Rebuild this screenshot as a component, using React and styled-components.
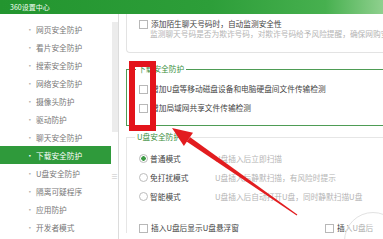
import React from 'react';
import styled, { createGlobalStyle } from 'styled-components';

const GlobalStyle = createGlobalStyle`
  html, body {
    margin: 0;
    padding: 0;
    background: #fff;
  }
  body {
    font-family: "Noto Sans CJK SC", "Noto Sans", sans-serif;
  }
`;

const menu = [
  '网页安全防护',
  '看片安全防护',
  '搜索安全防护',
  '网络安全防护',
  '摄像头防护',
  '驱动防护',
  '聊天安全防护',
  '下载安全防护',
  'U盘安全防护',
  '隔离可疑程序',
  '应用防护',
  '开发者模式',
];

const modes = [
  { name: '普通模式', desc: 'U盘插入后立即扫描', checked: true },
  { name: '免打扰模式', desc: 'U盘插入后静默扫描，有风险时提示' },
  { name: '智能模式', desc: 'U盘插入后自动打开U盘，同时静默扫描U盘' },
];

const App = () => {
  return (
    <>
      <GlobalStyle />
      <Window>
        <Header>
          <Title>360设置中心</Title>
        </Header>
        <Main>
          <Sidebar>
            {menu.map((item) => (
              <MenuItem key={item} $active={item === '下载安全防护'}>
                <Bullet $active={item === '下载安全防护'}>·</Bullet>
                {item}
              </MenuItem>
            ))}
          </Sidebar>
          <ScrollTrack>
            <ScrollThumb />
            <Grip>≡</Grip>
          </ScrollTrack>
          <Content>
            <Card>
              <Row>
                <CheckBox />
                <Label>添加陌生聊天号码时，自动监测安全性</Label>
              </Row>
              <Desc>监测聊天号码是否为欺诈号码，对欺诈号码给予风险提醒，确保网购安全</Desc>
            </Card>

            <Group $accent>
              <Legend $shift={-3}>下载安全防护</Legend>
              <Row>
                <CheckBox />
                <Label>增加U盘等移动磁盘设备和电脑硬盘间文件传输检测</Label>
              </Row>
              <Row $gap>
                <CheckBox />
                <Label>增加局域网共享文件传输检测</Label>
              </Row>
            </Group>

            <Group>
              <Legend $shift={-4}>U盘安全防护</Legend>
              {modes.map((m, i) => (
                <Row key={m.name} $gap={i > 0}>
                  <Radio $checked={m.checked} />
                  <ModeName>{m.name}</ModeName>
                  <ModeDesc>{m.desc}</ModeDesc>
                </Row>
              ))}
              <BottomRow>
                <Row>
                  <CheckBox />
                  <Label>插入U盘后显示U盘悬浮窗</Label>
                </Row>
                <Row>
                  <CheckBox />
                  <Label>插入U盘后</Label>
                </Row>
              </BottomRow>
            </Group>
          </Content>
        </Main>

        <Overlay>
          <RedBox />
          <Arrow width="383" height="239" viewBox="0 0 383 239">
            <polygon points="172,128 193,132.8 183.9,146" fill="#e21c1f" />
            <polygon points="186.6,141.6 190.2,137.2 297.3,214.6 296.7,215.4" fill="#e21c1f" />
          </Arrow>
          <Bubble />
        </Overlay>
      </Window>
    </>
  );
};

export default App;

const Window = styled.div`
  position: relative;
  width: 383px;
  height: 239px;
  overflow: hidden;
  background: #fff;
  font-size: 7.7px;
  color: #444;
`;

const Header = styled.div`
  height: 14px;
  display: flex;
  align-items: center;
  padding-left: 10px;
  background: linear-gradient(to right, #23952f 0%, #2d9e39 55%, #47b04f 85%, #8fd08e 100%);
  box-sizing: border-box;
`;

const Title = styled.span`
  color: #f4fff4;
  font-size: 7px;
  line-height: 14px;
`;

const Main = styled.div`
  display: flex;
  height: 225px;
`;

const Sidebar = styled.div`
  flex: none;
  width: 111px;
  padding-top: 6px;
  background: #fff;
`;

const MenuItem = styled.div`
  display: flex;
  align-items: center;
  height: 18px;
  padding-left: 26px;
  color: ${({ $active }) => ($active ? '#fff' : '#777')};
  background: ${({ $active }) => ($active ? '#2f9a3b' : 'transparent')};
  white-space: nowrap;
`;

const Bullet = styled.span`
  width: 10px;
  color: ${({ $active }) => ($active ? '#fff' : '#b0b0b0')};
`;

const ScrollTrack = styled.div`
  flex: none;
  width: 7px;
  border-right: 1px solid #dcdcdc;
  display: flex;
  flex-direction: column;
  align-items: center;
  padding-top: 8px;
`;

const ScrollThumb = styled.div`
  width: 6px;
  height: 110px;
  background: #ececec;
`;

const Grip = styled.div`
  margin-top: 40px;
  font-size: 7px;
  line-height: 8px;
  color: #c4c4c4;
`;

const Content = styled.div`
  flex: 1;
  min-width: 0;
  overflow: hidden;
  padding-left: 7px;
  display: flex;
  flex-direction: column;
`;

const Card = styled.div`
  flex: none;
  height: 39px;
  box-sizing: border-box;
  padding: 5px 0 0 12px;
  border: 1px solid #e3e3e3;
  border-top: none;
  border-right: none;
  border-radius: 0 0 0 4px;
`;

const Row = styled.div`
  display: flex;
  align-items: center;
  height: 10px;
  margin-top: ${({ $gap }) => ($gap ? '9px' : '0')};
  white-space: nowrap;
`;

const CheckBox = styled.span`
  width: 7px;
  height: 7px;
  flex: none;
  border: 1px solid #b8b8b8;
  background: #fff;
  margin-right: 3px;
`;

const Radio = styled.span`
  width: 7px;
  height: 7px;
  flex: none;
  border: 1px solid #bcbcbc;
  border-radius: 50%;
  margin-right: 2px;
  background: ${({ $checked }) =>
    $checked ? 'radial-gradient(circle, #3d9a45 0 2px, #fff 2.5px)' : '#fff'};
`;

const Label = styled.span`
  color: #444;
  line-height: 10px;
`;

const Desc = styled.div`
  margin-left: 11px;
  line-height: 10px;
  color: #b4b4b4;
  white-space: nowrap;
`;

const Group = styled.fieldset`
  flex: none;
  margin: ${({ $accent }) => ($accent ? '11px 0 0 0' : '6px 0 0 0')};
  padding: ${({ $accent }) => ($accent ? '10px 0 12px 12px' : '11px 0 0 12px')};
  border: 1px solid ${({ $accent }) => ($accent ? '#4e9c55' : '#e6e6e6')};
  border-right: none;
  border-bottom: ${({ $accent }) => ($accent ? '1px solid #4e9c55' : 'none')};
  min-width: 0;
`;

const Legend = styled.legend`
  margin-left: ${({ $shift }) => $shift}px;
  padding: 0 2px;
  line-height: 10px;
  color: #3b8f40;
`;

const ModeName = styled.span`
  width: 65px;
  flex: none;
  color: #444;
`;

const ModeDesc = styled.span`
  color: #b4b4b4;
`;

const BottomRow = styled.div`
  display: grid;
  grid-template-columns: 186px auto;
  margin-top: 22px;
`;

const Overlay = styled.div`
  position: absolute;
  inset: 0;
  pointer-events: none;
`;

const RedBox = styled.div`
  position: absolute;
  left: 129px;
  top: 61px;
  width: 27px;
  height: 70px;
  box-sizing: border-box;
  border: 6px solid #e3141b;
`;

const Arrow = styled.svg`
  position: absolute;
  left: 0;
  top: 0;
`;

const Bubble = styled.div`
  position: absolute;
  left: 344px;
  top: 212px;
  width: 56px;
  height: 56px;
  border-radius: 50%;
  border: 1px solid #e2e2e2;
  background: rgba(255, 255, 255, 0.55);
`;
